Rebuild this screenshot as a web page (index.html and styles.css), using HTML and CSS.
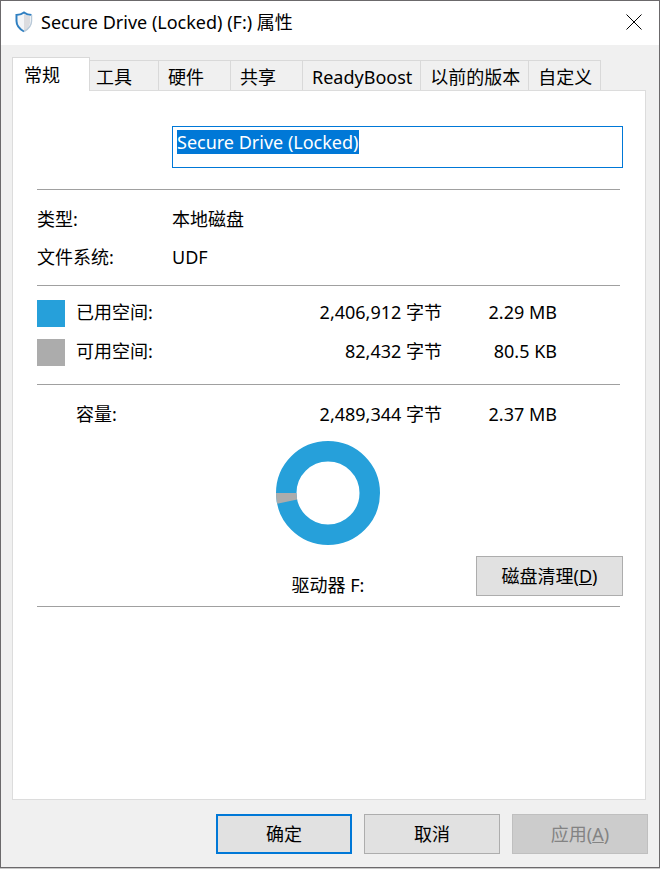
FILE: index.html
```html
<!DOCTYPE html>
<html lang="zh-CN">
<head>
<meta charset="utf-8">
<meta name="viewport" content="width=device-width, initial-scale=1">
<title>Secure Drive (Locked) (F:) 属性</title>
<link rel="stylesheet" href="styles.css">
</head>
<body>
<main class="dialog">
  <header class="titlebar">
    <svg class="shield" viewBox="0 0 18 22" aria-hidden="true">
      <path d="M9 3 L15 5 V11 C15 15 12.500 18 9 20 Z" fill="#dcdcdf"/>
      <path d="M9 3 L3 5 V11 C3 15 5.500 18 9 20 Z" fill="#f4f5f7"/>
      <path d="M9 20.500 C4.500 18 1.500 14.500 1.500 10 V4 C4.500 4 7 3 9 1.500 C11 3 13.500 4 16.500 4" fill="none" stroke="#2f7fc1" stroke-width="2"/>
      <path d="M16.500 4 V10 C16.500 14.500 13.500 18 9 20.500" fill="none" stroke="#b9c9d8" stroke-width="1.500"/>
    </svg>
    <h1 class="title">Secure Drive (Locked) (F:) 属性</h1>
    <button class="close" type="button" aria-label="关闭">
      <svg viewBox="0 0 16 16" aria-hidden="true"><path d="M.5 .5 L15.500 15.500 M15.500 .5 L.5 15.500" stroke="#000" stroke-width="1" fill="none"/></svg>
    </button>
  </header>

  <div class="body">
    <div class="tabs" role="tablist">
      <button class="tab tab-active" type="button" role="tab" aria-selected="true">常规</button>
      <button class="tab" type="button" role="tab">工具</button>
      <button class="tab" type="button" role="tab">硬件</button>
      <button class="tab" type="button" role="tab">共享</button>
      <button class="tab" type="button" role="tab">ReadyBoost</button>
      <button class="tab" type="button" role="tab">以前的版本</button>
      <button class="tab" type="button" role="tab">自定义</button>
    </div>

    <section class="panel" role="tabpanel">
      <input class="name" id="name" type="text" aria-label="卷标" value="Secure Drive (Locked)" spellcheck="false">

      <hr class="rule">
      <dl class="facts">
        <dt>类型:</dt><dd>本地磁盘</dd>
        <dt>文件系统:</dt><dd>UDF</dd>
      </dl>
      <hr class="rule">

      <table class="usage">
        <tbody>
          <tr>
            <td class="key"><span class="swatch used"></span></td>
            <th scope="row">已用空间:</th>
            <td class="bytes">2,406,912 字节</td>
            <td class="size">2.29 MB</td>
          </tr>
          <tr>
            <td class="key"><span class="swatch free"></span></td>
            <th scope="row">可用空间:</th>
            <td class="bytes">82,432 字节</td>
            <td class="size">80.5 KB</td>
          </tr>
        </tbody>
      </table>
      <hr class="rule">
      <table class="usage total">
        <tbody>
          <tr>
            <td class="key"></td>
            <th scope="row">容量:</th>
            <td class="bytes">2,489,344 字节</td>
            <td class="size">2.37 MB</td>
          </tr>
        </tbody>
      </table>

      <div class="chart">
        <figure class="drive">
          <svg class="donut" viewBox="0 0 104 104" aria-hidden="true">
            <circle cx="52" cy="52" r="41.750" fill="none" stroke="#26a0da" stroke-width="20.500"/>
            <path d="M0 52 H20.500 A31.500 31.500 0 0 0 21.200 58.600 L1.200 62.800 A52 52 0 0 1 0 52 Z" fill="#acacac"/>
          </svg>
          <figcaption>驱动器 F:</figcaption>
        </figure>
        <button class="btn cleanup" type="button">磁盘清理(<u>D</u>)</button>
      </div>
      <hr class="rule">
    </section>
  </div>

  <footer class="actions">
    <button class="btn btn-default" type="button">确定</button>
    <button class="btn" type="button">取消</button>
    <button class="btn" type="button" disabled>应用(<u>A</u>)</button>
  </footer>
</main>
<script src="script.js"></script>
</body>
</html>
```
FILE: styles.css
```css
* {
  box-sizing: border-box;
}

body {
  margin: 0;
  background: #c8c8c8;
  color: #000;
  font: 400 18px/24px "Noto Sans", "Noto Sans CJK SC", sans-serif;
}

button,
input {
  font: inherit;
  color: inherit;
}

.dialog {
  display: flex;
  flex-direction: column;
  min-height: calc(100vh - 1px);
  margin-bottom: 1px;
  border: 1px solid #6b696b;
  background: #f0f0f0;
}

.titlebar {
  display: flex;
  align-items: center;
  height: 44px;
  padding: 0 17px 2px 14px;
  background: #fff;
}

.shield {
  width: 18px;
  height: 22px;
  margin-right: 8px;
}

.title {
  flex: 1;
  margin: 0;
  font-size: 18px;
  font-weight: 400;
}

.close {
  display: flex;
  padding: 0;
  border: 0;
  background: none;
}

.close svg {
  width: 16px;
  height: 16px;
}

.body {
  display: flex;
  flex: 1;
  flex-direction: column;
  padding: 12px 13px 0 11px;
}

.tabs {
  display: flex;
  align-items: flex-end;
}

.tab {
  min-width: 73px;
  height: 30px;
  margin-right: -1px;
  padding: 2px 8px 0 9px;
  border: 1px solid #d9d9d9;
  border-bottom: 0;
  background: #f0f0f0;
  line-height: 28px;
  text-align: left;
  white-space: nowrap;
}

.tab-active {
  z-index: 1;
  width: 78px;
  height: 34px;
  margin-right: -4px;
  margin-bottom: -1px;
  padding: 0 11px;
  background: #fff;
  line-height: 34px;
}

.panel {
  flex: 1;
  padding: 35px 22px 24px 24px;
  border: 1px solid #dcdcdc;
  background: #fff;
}

.name {
  display: block;
  width: calc(100% - 135px);
  height: 42px;
  margin: 0 0 21px 135px;
  padding: 3px 4px 13px;
  border: 1px solid #0078d7;
  border-radius: 0;
  outline: 0;
  background: #fff;
  line-height: 24px;
}

.name::selection {
  background: #0078d7;
  color: #fff;
}

.rule {
  height: 1px;
  margin: 0 3px 0 0;
  border: 0;
  background: #a0a0a0;
}

.facts {
  display: grid;
  grid-template-columns: 135px 1fr;
  margin: 0;
  padding: 10px 0 9px;
  line-height: 38px;
}

.facts dd {
  margin: 0;
}

.usage {
  width: 100%;
  margin: 8px 0 12px;
  border-collapse: collapse;
  table-layout: fixed;
}

.usage td,
.usage th {
  height: 39px;
  padding: 0 0 4px;
  font-weight: 400;
  text-align: left;
}

.usage .key {
  width: 39px;
  padding: 0;
}

.usage .bytes {
  width: 180px;
  text-align: right;
}

.usage .size {
  width: 181px;
  padding-right: 66px;
  text-align: right;
}

.total {
  margin: 11px 0 6px;
}

.swatch {
  display: block;
  width: 28px;
  height: 27px;
}

.used {
  background: #26a0da;
}

.free {
  background: #acacac;
}

.chart {
  display: grid;
  grid-template-columns: 1fr auto calc(50% - 50px);
  align-items: end;
  margin-bottom: 9px;
}

.drive {
  display: grid;
  grid-column: 2;
  justify-items: center;
  gap: 28px;
  margin: 0;
}

.donut {
  width: 104px;
  height: 104px;
}

.btn {
  width: 136px;
  height: 40px;
  padding: 0;
  border: 1px solid #adadad;
  background: #e1e1e1;
}

.btn:disabled {
  border-color: #bfbfbf;
  background: #ccc;
  color: #838383;
}

.btn-default {
  border: 2px solid #0078d7;
}

.cleanup {
  justify-self: end;
  width: 147px;
  margin-bottom: 1px;
}

.actions {
  display: flex;
  justify-content: flex-end;
  gap: 12px;
  padding: 14px 11px 13px;
}
```
FILE: script.js
```js
const nameBox = document.getElementById("name");
nameBox.focus();
nameBox.select();
```
